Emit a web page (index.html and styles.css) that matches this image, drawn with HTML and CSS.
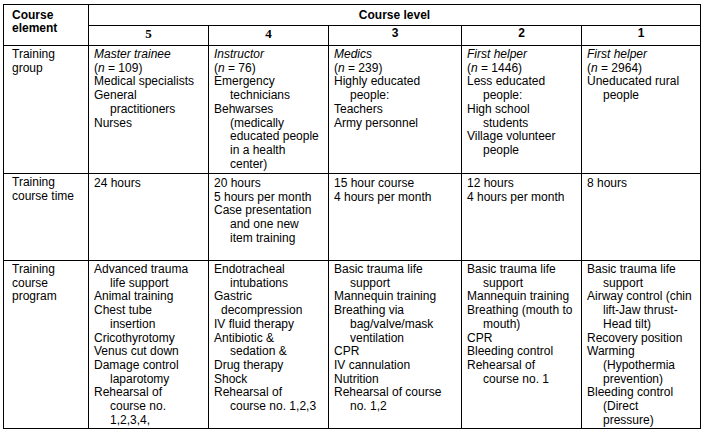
FILE: index.html
```html
<!DOCTYPE html>
<html>
<head>
<meta charset="utf-8">
<link rel="stylesheet" href="styles.css">
</head>
<body>
<div class="tbl">
  <div class="c hd el">Course<br>element</div>
  <div class="c hd lvl">Course level</div>
  <div class="c hd num serif">5</div>
  <div class="c hd num serif">4</div>
  <div class="c hd num">3</div>
  <div class="c hd num">2</div>
  <div class="c hd num">1</div>

  <div class="c first">Training<br>group</div>
  <div class="c">
    <div class="ln"><i>Master trainee</i></div>
    <div class="ln">(<i>n</i> = 109)</div>
    <div class="ln">Medical specialists</div>
    <div class="ln">General<br>practitioners</div>
    <div class="ln">Nurses</div>
  </div>
  <div class="c">
    <div class="ln"><i>Instructor</i></div>
    <div class="ln">(<i>n</i> = 76)</div>
    <div class="ln">Emergency<br>technicians</div>
    <div class="ln">Behwarses<br>(medically<br>educated people<br>in a health<br>center)</div>
  </div>
  <div class="c">
    <div class="ln"><i>Medics</i></div>
    <div class="ln">(<i>n</i> = 239)</div>
    <div class="ln">Highly educated<br>people:</div>
    <div class="ln">Teachers</div>
    <div class="ln">Army personnel</div>
  </div>
  <div class="c">
    <div class="ln"><i>First helper</i></div>
    <div class="ln">(<i>n</i> = 1446)</div>
    <div class="ln">Less educated<br>people:</div>
    <div class="ln">High school<br>students</div>
    <div class="ln">Village volunteer<br>people</div>
  </div>
  <div class="c">
    <div class="ln"><i>First helper</i></div>
    <div class="ln">(<i>n</i> = 2964)</div>
    <div class="ln">Uneducated rural<br>people</div>
  </div>

  <div class="c first">Training<br>course time</div>
  <div class="c t2">24 hours</div>
  <div class="c t2">
    <div class="ln">20 hours</div>
    <div class="ln">5 hours per month</div>
    <div class="ln">Case presentation<br>and one new<br>item training</div>
  </div>
  <div class="c t2">
    <div class="ln">15 hour course</div>
    <div class="ln">4 hours per month</div>
  </div>
  <div class="c t2">
    <div class="ln">12 hours</div>
    <div class="ln">4 hours per month</div>
  </div>
  <div class="c t2">8 hours</div>

  <div class="c first">Training<br>course<br>program</div>
  <div class="c">
    <div class="ln">Advanced trauma<br>life support</div>
    <div class="ln">Animal training</div>
    <div class="ln">Chest tube<br>insertion</div>
    <div class="ln">Cricothyrotomy</div>
    <div class="ln">Venus cut down</div>
    <div class="ln">Damage control<br>laparotomy</div>
    <div class="ln">Rehearsal of<br>course no.<br>1,2,3,4,</div>
  </div>
  <div class="c">
    <div class="ln">Endotracheal<br>intubations</div>
    <div class="ln">Gastric</div>
    <div class="sub">decompression</div>
    <div class="ln">IV fluid therapy</div>
    <div class="ln">Antibiotic &amp;<br>sedation &amp;</div>
    <div class="ln">Drug therapy</div>
    <div class="ln">Shock</div>
    <div class="ln">Rehearsal of<br>course no. 1,2,3</div>
  </div>
  <div class="c">
    <div class="ln">Basic trauma life<br>support</div>
    <div class="ln">Mannequin training</div>
    <div class="ln">Breathing via<br>bag/valve/mask<br>ventilation</div>
    <div class="ln">CPR</div>
    <div class="ln">IV cannulation</div>
    <div class="ln">Nutrition</div>
    <div class="ln">Rehearsal of course<br>no. 1,2</div>
  </div>
  <div class="c">
    <div class="ln">Basic trauma life<br>support</div>
    <div class="ln">Mannequin training</div>
    <div class="ln">Breathing (mouth to<br>mouth)</div>
    <div class="ln">CPR</div>
    <div class="ln">Bleeding control</div>
    <div class="ln">Rehearsal of<br>course no. 1</div>
  </div>
  <div class="c">
    <div class="ln">Basic trauma life<br>support</div>
    <div class="ln">Airway control (chin<br>lift-Jaw thrust-<br>Head tilt)</div>
    <div class="ln">Recovery position</div>
    <div class="ln">Warming<br>(Hypothermia<br>prevention)</div>
    <div class="ln">Bleeding control<br>(Direct<br>pressure)</div>
  </div>
</div>
</body>
</html>
```

FILE: styles.css
```css
html, body {
  margin: 0;
  padding: 0;
  background: #fff;
}
body {
  font-family: "Liberation Sans", Arial, sans-serif;
  font-size: 12px;
  line-height: 13.7px;
  color: #000;
}
.tbl {
  display: grid;
  grid-template-columns: 84px 119px 119px 132px 119px 118px;
  grid-template-rows: 20px 19px 127px 86px 167px;
  gap: 1px;
  padding: 1px;
  background: #000;
  margin: 4px 0 0 3px;
  width: max-content;
}
.c {
  background: #fff;
  padding: 2px 0 0 5px;
  white-space: nowrap;
  overflow: hidden;
}
.c.first {
  padding-left: 8px;
}
.t2 {
  padding-top: 3px;
}
.hd {
  font-weight: bold;
}
.el {
  grid-row: 1 / span 2;
  padding: 4px 0 0 8px;
  line-height: 13px;
}
.lvl {
  grid-column: 2 / span 5;
  text-align: center;
  padding: 4px 0 0 0;
}
.num {
  text-align: center;
  padding: 1px 0 0 0;
}
.serif {
  font-family: "Liberation Serif", "Times New Roman", serif;
  font-size: 13px;
}
.ln {
  padding-left: 16px;
  text-indent: -16px;
}
.sub {
  padding-left: 7px;
}
```
